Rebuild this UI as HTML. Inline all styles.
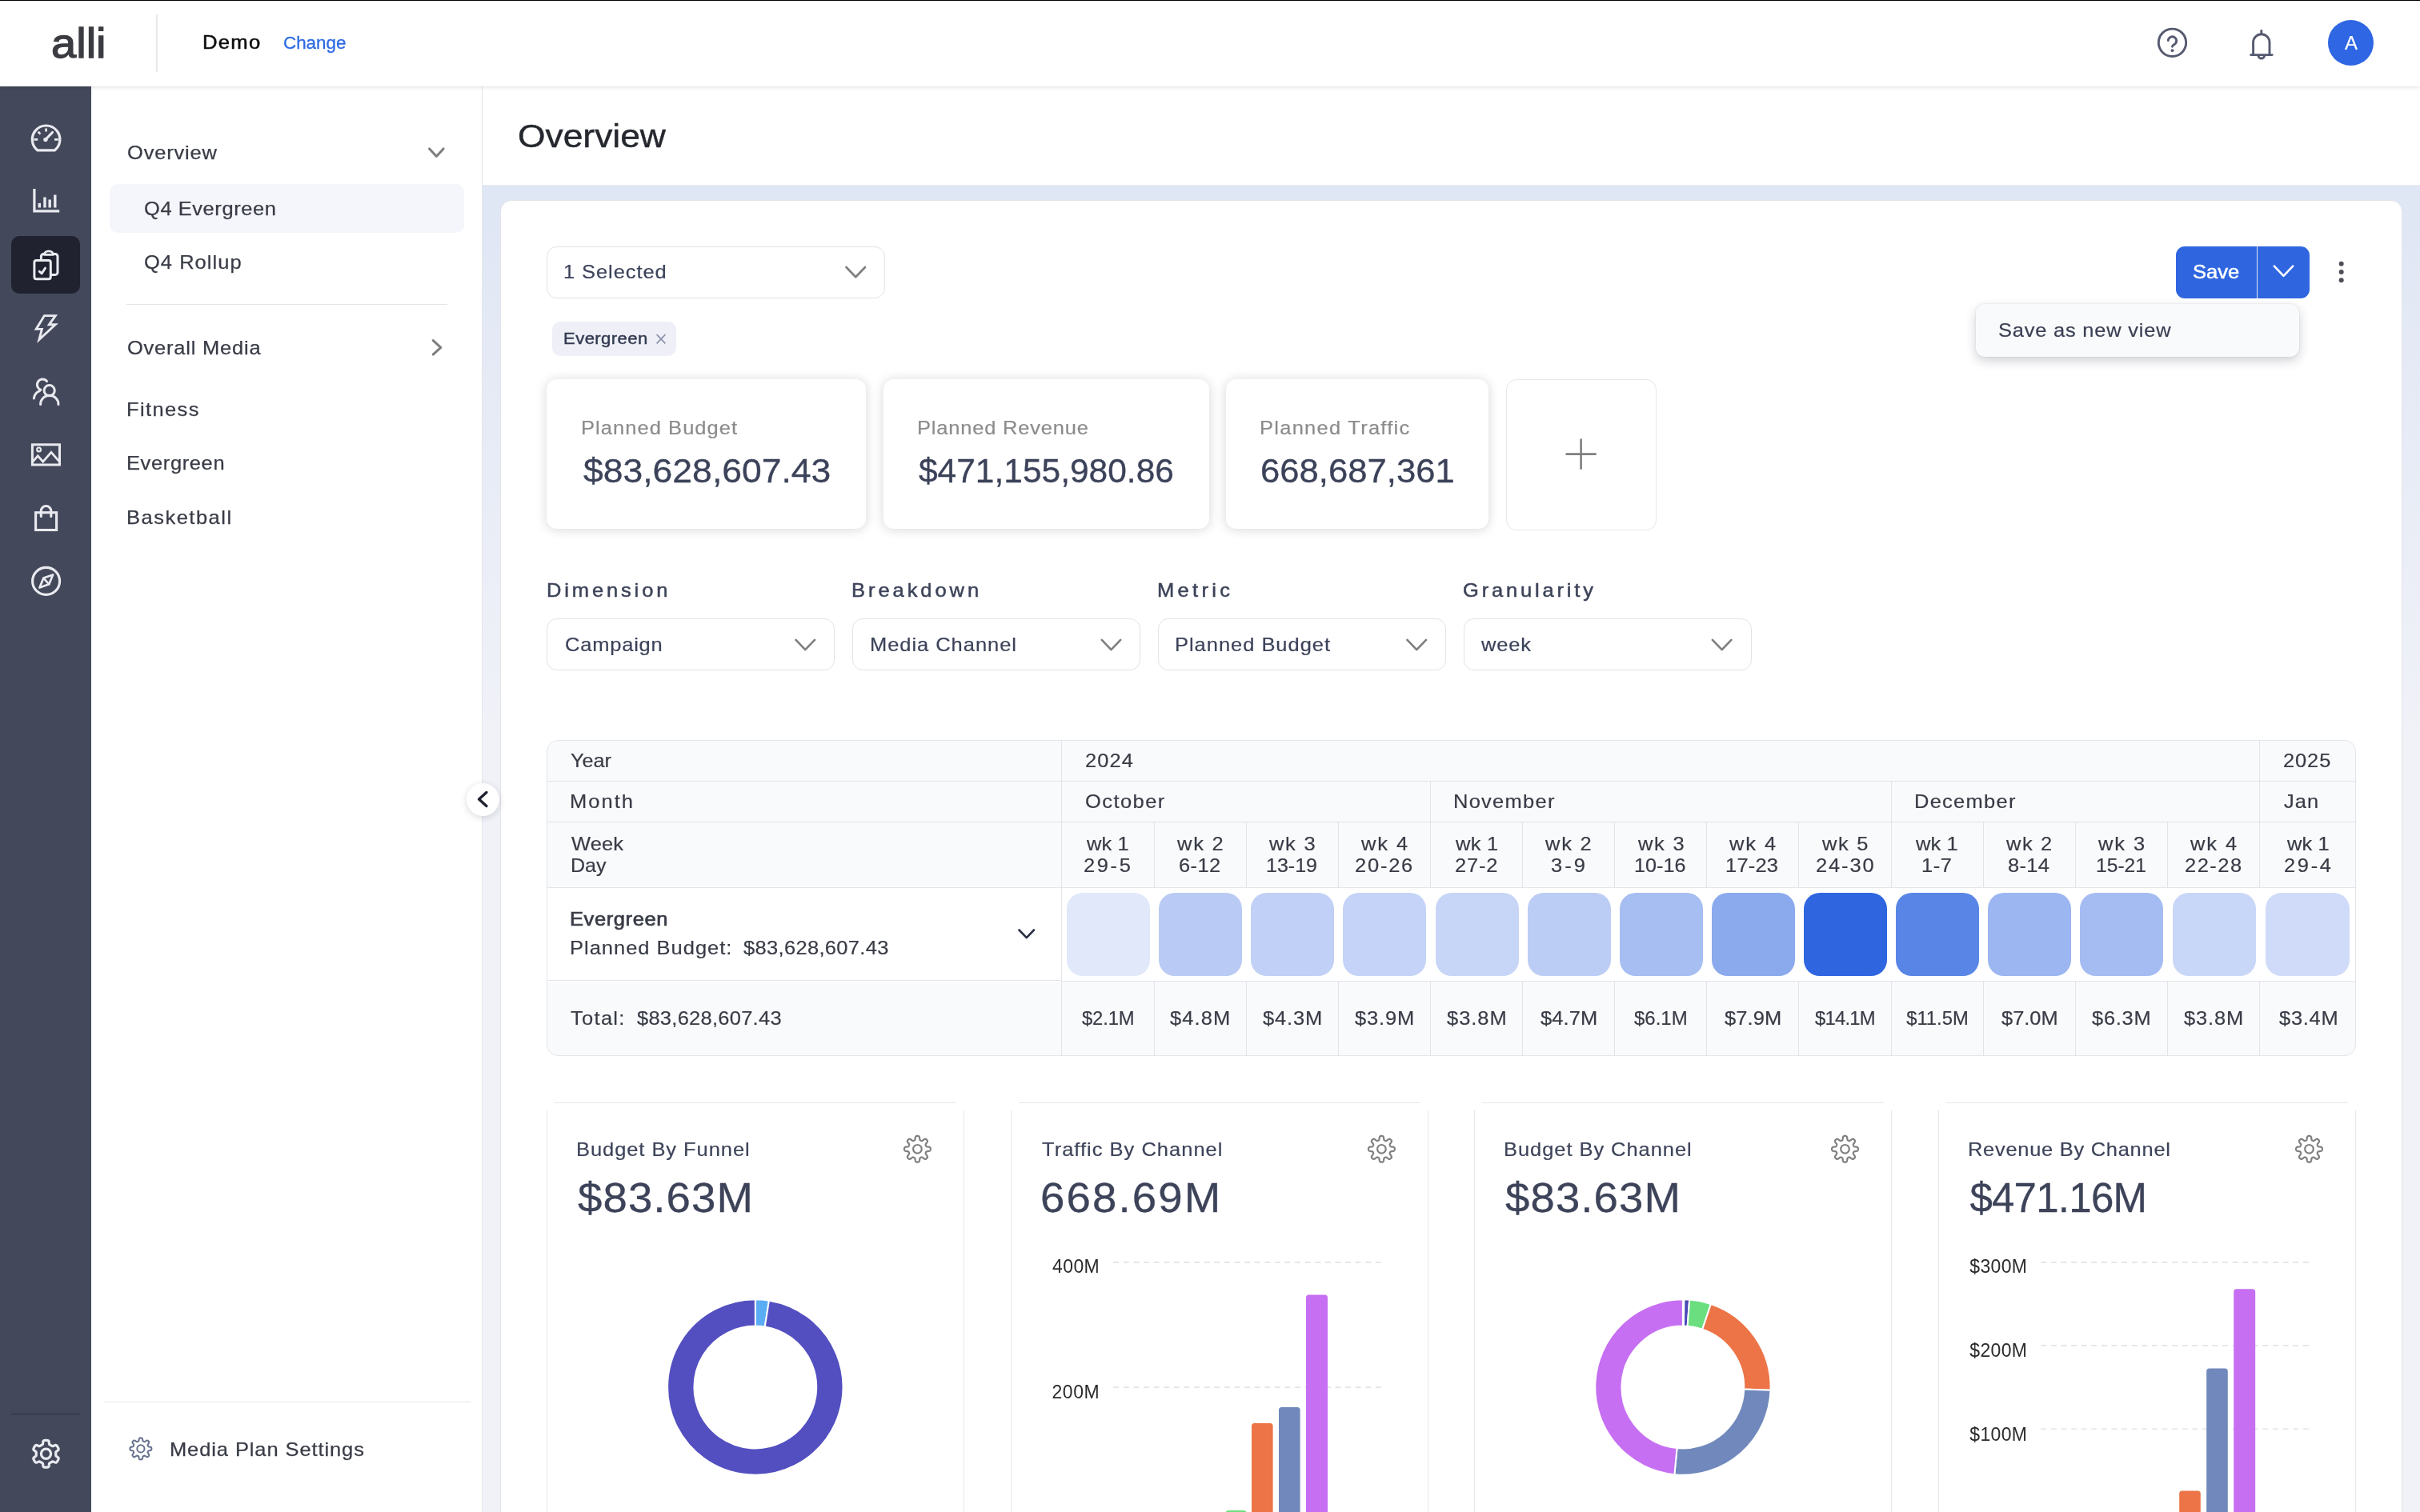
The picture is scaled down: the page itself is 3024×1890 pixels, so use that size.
<!DOCTYPE html>
<html lang="en"><head><meta charset="utf-8"><title>Overview</title><style>
html,body{margin:0;padding:0}
body{width:3024px;height:1890px;overflow:hidden;background:#fff;position:relative;font-family:"Liberation Sans",sans-serif}
span{position:absolute;white-space:pre;display:block}
div,svg{position:absolute;box-sizing:border-box}
svg{overflow:visible}
.sel{border:1.5px solid #e2e3e8;border-radius:13px;background:#fff}
.kpi{background:#fff;border-radius:13px;box-shadow:0 1px 14px rgba(20,20,40,.17)}
.chart{border:2px solid #ededf1;border-radius:12px;background:#fff}
.hl{background:#e3e4e8}
@media (max-width:2000px){html{zoom:.5}}
</style></head><body>
<div id="app" style="left:0;top:0;width:3024px;height:1890px;overflow:hidden;will-change:transform">
<div id="mainbg" style="left:603px;top:231px;width:2421px;height:1659px;background:linear-gradient(#dfe6f4 0px,#f1f2f8 700px,#f1f2f8 100%)"></div>
<div id="card" style="left:625px;top:250px;width:2377px;height:1700px;background:#fff;border-radius:14px;border:1px solid #e3e4ea"></div>
<div id="titlebar" style="left:603px;top:108px;width:2421px;height:124px;background:#fff;border-bottom:1px solid #ebebee"></div>
<div id="navpanel" style="left:114px;top:108px;width:489px;height:1782px;background:#fff;border-right:1px solid #e6e6e9"></div>
<div id="rail" style="left:0;top:108px;width:114px;height:1782px;background:#44485b"></div>
<div id="header" style="left:0;top:0;width:3024px;height:108px;background:#fff;box-shadow:0 1px 5px rgba(0,0,0,.13)"></div>
<div style="left:0;top:0;width:3024px;height:1px;background:#000"></div>
<span style="left:63.62px;top:28.00px;font-size:52.50px;line-height:52.50px;letter-spacing:0.000px;color:#3b3c42;-webkit-text-stroke:1.3px #3b3c42;transform:scaleX(1.0684);transform-origin:0 0;">alli</span>
<div style="left:195px;top:18px;width:2px;height:72px;background:#e9e9ec"></div>
<span style="left:253.35px;top:41.00px;font-size:24.00px;line-height:24.00px;letter-spacing:1.178px;color:#0c0c0c;-webkit-text-stroke:0.5px #0c0c0c;transform:scaleX(1.0700);transform-origin:0 0;">Demo</span>
<span style="left:353.88px;top:43.00px;font-size:22.00px;line-height:22.00px;letter-spacing:0.000px;color:#2d6ae3;-webkit-text-stroke:0.3px #2d6ae3;transform:scaleX(1.0171);transform-origin:0 0;">Change</span>
<svg style="left:0;top:0" width="1" height="1"><g fill="none" stroke="#565a70" stroke-width="2.9" stroke-linecap="round" stroke-linejoin="round"><circle cx="2714.5" cy="53.3" r="17.2"/><path d="M2709.3 50.6A5.2 5.2 0 1 1 2717.6 55.2C2715.6 56.3 2714.5 56.9 2714.5 58.2"/></g><circle cx="2714.5" cy="63.2" r="1.9" fill="#565a70"/></svg>
<svg style="left:0;top:0" width="1" height="1"><g fill="none" stroke="#565a70" stroke-width="2.9" stroke-linecap="round" stroke-linejoin="round"><path d="M2815.6 68.3V53a10.2 10.2 0 0 1 20.4 0V68.3"/><path d="M2812.6 68.6H2839.2"/><path d="M2825.8 38.4V42"/><path d="M2822 70a3.9 3.9 0 0 0 7.6 0"/></g></svg>
<div style="left:2909px;top:25.3px;width:57px;height:57px;border-radius:50%;background:#2f66e3"></div>
<span style="left:2930.00px;top:42.00px;font-size:24.00px;line-height:24.00px;letter-spacing:0.000px;color:#fff;-webkit-text-stroke:0.2px #fff;">A</span>
<div style="left:14px;top:295px;width:86px;height:72px;border-radius:10px;background:#20232f"></div>
<svg style="left:0;top:0" width="1" height="1"><g fill="none" stroke="#e9eaf0" stroke-width="3.2" stroke-linecap="round" stroke-linejoin="round"><path d="M46.9 187.9A17.3 17.3 0 1 1 68.3 187.9Z" stroke-linejoin="round"/><path d="M57 174.4L65.6 165.4" stroke-width="3"/><path d="M57.6 160.4v4.2M47.7 164.7l2.7 2.9M42.4 174.3h4.8M68 174.3h4.8" stroke-width="2.7" stroke-linecap="butt"/></g></svg><svg style="left:0;top:0" width="1" height="1"><circle cx="56.9" cy="174.6" r="2.7" fill="#e9eaf0"/></svg>
<svg style="left:0;top:0" width="1" height="1"><g fill="none" stroke="#e9eaf0" stroke-width="3.2" stroke-linecap="round" stroke-linejoin="round"><path d="M42.9 237.5V263.9H72.6" stroke-linecap="square" stroke-linejoin="miter"/><path d="M49.3 254v5.4M56 246.6v12.8M62.2 249.6v9.8M68.8 243.4v16" stroke-linecap="butt" stroke-width="3.4"/></g></svg>
<svg style="left:0;top:0" width="1" height="1"><g fill="none" stroke="#e9eaf0" stroke-width="3.0" stroke-linecap="round" stroke-linejoin="round"><rect x="42.9" y="325.6" width="20.4" height="23.2" rx="2.6"/><path d="M51.4 325V320.5a3 3 0 0 1 3-3h1.8M66 317.5h3a3 3 0 0 1 3 3V340.4a3 3 0 0 1-3 3H64"/><path d="M55.3 318.4a5.6 4.6 0 0 1 11.2 0Z" stroke-width="2.8"/><path d="M49.3 339.3l2.9 2.5 4.3-6.6" stroke-width="3"/></g></svg>
<svg style="left:0;top:0" width="1" height="1"><g fill="none" stroke="#e9eaf0" stroke-width="2.9" stroke-linecap="round" stroke-linejoin="round"><path d="M55.4 394.6H69.3L61.4 405.7H69.2L48.9 424.6L52.4 411.4H45.2Z" stroke-linejoin="miter"/></g></svg>
<svg style="left:0;top:0" width="1" height="1"><g fill="none" stroke="#e9eaf0" stroke-width="3.0" stroke-linecap="round" stroke-linejoin="round"><circle cx="61.7" cy="488.2" r="6.6"/><path d="M50.6 505.4a11.2 11.2 0 0 1 22.4 0"/><path d="M58.6 476.6a6.8 6.8 0 1 0-7.6 10.6"/><path d="M42.3 498a11.5 11.5 0 0 1 7.3-9.4"/></g></svg>
<svg style="left:0;top:0" width="1" height="1"><g fill="none" stroke="#e9eaf0" stroke-width="3.0" stroke-linecap="round" stroke-linejoin="round"><rect x="40.4" y="555.8" width="34.1" height="25.2" stroke-linejoin="miter"/><circle cx="48.6" cy="561.9" r="2.4" stroke-width="2.2"/><path d="M41.6 576.4L47.3 569.9L53.7 577.2L64 565.4L73.6 576.4" stroke-linejoin="miter" stroke-width="2.8"/></g></svg>
<svg style="left:0;top:0" width="1" height="1"><g fill="none" stroke="#e9eaf0" stroke-width="3.1" stroke-linecap="round" stroke-linejoin="round"><rect x="44.6" y="640.7" width="26" height="21.8" stroke-linejoin="miter"/><path d="M51.3 645.4V638.7a6.25 6.25 0 0 1 12.5 0V645.4"/></g></svg>
<svg style="left:0;top:0" width="1" height="1"><g fill="none" stroke="#e9eaf0" stroke-width="3.1" stroke-linecap="round" stroke-linejoin="round"><circle cx="57.6" cy="726.4" r="17"/><path d="M66.1 718.5L61.3 730.3L49.5 734.6L54.4 722.6Z" stroke-width="2.7" stroke-linejoin="round"/><path d="M54.6 722.8L61.2 730.2" stroke-width="2.5"/></g></svg>
<div style="left:14px;top:1766.5px;width:86px;height:1.3px;background:#2c2f3e"></div>
<svg style="left:0;top:0" width="1" height="1"><g fill="none" stroke="#e9eaf0" stroke-width="3.2" stroke-linecap="round" stroke-linejoin="round"><path d="M57.50 1800.40L57.94 1800.41L58.38 1800.43L58.83 1800.46L59.26 1800.52L59.70 1800.60L60.12 1800.73L60.53 1800.95L60.89 1801.37L61.14 1802.12L61.28 1803.20L61.36 1804.27L61.49 1805.02L61.70 1805.45L61.95 1805.70L62.23 1805.89L62.51 1806.04L62.80 1806.19L63.09 1806.34L63.37 1806.49L63.65 1806.65L63.93 1806.81L64.20 1806.98L64.47 1807.15L64.74 1807.33L65.02 1807.50L65.32 1807.65L65.67 1807.74L66.14 1807.70L66.85 1807.44L67.82 1806.98L68.82 1806.55L69.60 1806.40L70.14 1806.50L70.54 1806.74L70.86 1807.04L71.15 1807.38L71.42 1807.73L71.67 1808.10L71.91 1808.47L72.14 1808.85L72.35 1809.24L72.55 1809.63L72.74 1810.03L72.92 1810.44L73.06 1810.85L73.16 1811.29L73.17 1811.75L72.99 1812.27L72.47 1812.87L71.60 1813.52L70.71 1814.13L70.13 1814.61L69.86 1815.01L69.77 1815.36L69.75 1815.69L69.76 1816.01L69.77 1816.33L69.79 1816.66L69.80 1816.98L69.80 1817.30L69.80 1817.62L69.79 1817.94L69.77 1818.27L69.76 1818.59L69.75 1818.91L69.77 1819.24L69.86 1819.59L70.13 1819.99L70.71 1820.47L71.60 1821.08L72.47 1821.73L72.99 1822.33L73.17 1822.85L73.16 1823.31L73.06 1823.75L72.92 1824.16L72.74 1824.57L72.55 1824.97L72.35 1825.36L72.14 1825.75L71.91 1826.13L71.67 1826.50L71.42 1826.87L71.15 1827.22L70.86 1827.56L70.54 1827.86L70.14 1828.10L69.60 1828.20L68.82 1828.05L67.82 1827.62L66.85 1827.16L66.14 1826.90L65.67 1826.86L65.32 1826.95L65.02 1827.10L64.74 1827.27L64.47 1827.45L64.20 1827.62L63.93 1827.79L63.65 1827.95L63.37 1828.11L63.09 1828.26L62.80 1828.41L62.51 1828.56L62.23 1828.71L61.95 1828.90L61.70 1829.15L61.49 1829.58L61.36 1830.33L61.28 1831.40L61.14 1832.48L60.89 1833.23L60.53 1833.65L60.12 1833.87L59.70 1834.00L59.26 1834.08L58.83 1834.14L58.38 1834.17L57.94 1834.19L57.50 1834.20L57.06 1834.19L56.62 1834.17L56.17 1834.14L55.74 1834.08L55.30 1834.00L54.88 1833.87L54.47 1833.65L54.11 1833.23L53.86 1832.48L53.72 1831.40L53.64 1830.33L53.51 1829.58L53.30 1829.15L53.05 1828.90L52.77 1828.71L52.49 1828.56L52.20 1828.41L51.91 1828.26L51.63 1828.11L51.35 1827.95L51.07 1827.79L50.80 1827.62L50.53 1827.45L50.26 1827.27L49.98 1827.10L49.68 1826.95L49.33 1826.86L48.86 1826.90L48.15 1827.16L47.18 1827.62L46.18 1828.05L45.40 1828.20L44.86 1828.10L44.46 1827.86L44.14 1827.56L43.85 1827.22L43.58 1826.87L43.33 1826.50L43.09 1826.13L42.86 1825.75L42.65 1825.36L42.45 1824.97L42.26 1824.57L42.08 1824.16L41.94 1823.75L41.84 1823.31L41.83 1822.85L42.01 1822.33L42.53 1821.73L43.40 1821.08L44.29 1820.47L44.87 1819.99L45.14 1819.59L45.23 1819.24L45.25 1818.91L45.24 1818.59L45.23 1818.27L45.21 1817.94L45.20 1817.62L45.20 1817.30L45.20 1816.98L45.21 1816.66L45.23 1816.33L45.24 1816.01L45.25 1815.69L45.23 1815.36L45.14 1815.01L44.87 1814.61L44.29 1814.13L43.40 1813.52L42.53 1812.87L42.01 1812.27L41.83 1811.75L41.84 1811.29L41.94 1810.85L42.08 1810.44L42.26 1810.03L42.45 1809.63L42.65 1809.24L42.86 1808.85L43.09 1808.47L43.33 1808.10L43.58 1807.73L43.85 1807.38L44.14 1807.04L44.46 1806.74L44.86 1806.50L45.40 1806.40L46.18 1806.55L47.18 1806.98L48.15 1807.44L48.86 1807.70L49.33 1807.74L49.68 1807.65L49.98 1807.50L50.26 1807.33L50.53 1807.15L50.80 1806.98L51.07 1806.81L51.35 1806.65L51.63 1806.49L51.91 1806.34L52.20 1806.19L52.49 1806.04L52.77 1805.89L53.05 1805.70L53.30 1805.45L53.51 1805.02L53.64 1804.27L53.72 1803.20L53.86 1802.12L54.11 1801.37L54.47 1800.95L54.88 1800.73L55.30 1800.60L55.74 1800.52L56.17 1800.46L56.62 1800.43L57.06 1800.41Z"/><circle cx="57.5" cy="1817.3" r="6.1"/></g></svg>
<span style="left:158.75px;top:179.00px;font-size:23.80px;line-height:23.80px;letter-spacing:0.781px;color:#383b45;-webkit-text-stroke:0.25px #383b45;transform:scaleX(1.0700);transform-origin:0 0;">Overview</span>
<svg style="left:0;top:0" width="1" height="1"><path d="M536.6 185.9L545.4 195.4L554.1 185.9" fill="none" stroke="#7d7d7d" stroke-width="3" stroke-linecap="round" stroke-linejoin="round"/></svg>
<div style="left:137px;top:230px;width:443px;height:61px;border-radius:10px;background:#f5f6fb"></div>
<span style="left:179.75px;top:249.00px;font-size:23.80px;line-height:23.80px;letter-spacing:0.536px;color:#383b45;-webkit-text-stroke:0.25px #383b45;transform:scaleX(1.0700);transform-origin:0 0;">Q4 Evergreen</span>
<span style="left:179.75px;top:316.00px;font-size:23.80px;line-height:23.80px;letter-spacing:0.978px;color:#383b45;-webkit-text-stroke:0.25px #383b45;transform:scaleX(1.0700);transform-origin:0 0;">Q4 Rollup</span>
<div style="left:158px;top:379.5px;width:401px;height:1.5px;background:#e4e5e9"></div>
<span style="left:158.75px;top:423.00px;font-size:23.80px;line-height:23.80px;letter-spacing:0.741px;color:#383b45;-webkit-text-stroke:0.25px #383b45;transform:scaleX(1.0700);transform-origin:0 0;">Overall Media</span>
<svg style="left:0;top:0" width="1" height="1"><path d="M541.2 425.6L550.8 434.4L541.2 443.1" fill="none" stroke="#7d7d7d" stroke-width="3" stroke-linecap="round" stroke-linejoin="round"/></svg>
<span style="left:157.86px;top:500.00px;font-size:23.80px;line-height:23.80px;letter-spacing:1.303px;color:#383b45;-webkit-text-stroke:0.25px #383b45;transform:scaleX(1.0700);transform-origin:0 0;">Fitness</span>
<span style="left:157.86px;top:567.00px;font-size:23.80px;line-height:23.80px;letter-spacing:0.592px;color:#383b45;-webkit-text-stroke:0.25px #383b45;transform:scaleX(1.0700);transform-origin:0 0;">Evergreen</span>
<span style="left:157.86px;top:635.00px;font-size:23.80px;line-height:23.80px;letter-spacing:1.409px;color:#383b45;-webkit-text-stroke:0.25px #383b45;transform:scaleX(1.0700);transform-origin:0 0;">Basketball</span>
<div style="left:130px;top:1751.5px;width:458px;height:1.5px;background:#e4e5e9"></div>
<svg style="left:0;top:0" width="1" height="1"><g fill="none" stroke="#65708d" stroke-width="2.0" stroke-linecap="round" stroke-linejoin="round"><path d="M175.90 1797.40L176.25 1797.41L176.61 1797.45L176.95 1797.52L177.29 1797.66L177.61 1797.91L177.88 1798.37L178.09 1799.09L178.23 1799.95L178.36 1800.67L178.51 1801.15L178.71 1801.42L178.92 1801.60L179.15 1801.73L179.38 1801.84L179.61 1801.94L179.85 1802.03L180.09 1802.12L180.34 1802.19L180.62 1802.21L180.95 1802.15L181.39 1801.93L182.00 1801.51L182.70 1801.01L183.36 1800.64L183.88 1800.51L184.28 1800.55L184.62 1800.69L184.91 1800.89L185.19 1801.11L185.45 1801.35L185.69 1801.61L185.91 1801.89L186.11 1802.18L186.25 1802.52L186.29 1802.92L186.16 1803.44L185.79 1804.10L185.29 1804.80L184.87 1805.41L184.65 1805.85L184.59 1806.18L184.61 1806.46L184.68 1806.71L184.77 1806.95L184.86 1807.19L184.96 1807.42L185.07 1807.65L185.20 1807.88L185.38 1808.09L185.65 1808.29L186.13 1808.44L186.85 1808.57L187.71 1808.71L188.43 1808.92L188.89 1809.19L189.14 1809.51L189.28 1809.85L189.35 1810.19L189.39 1810.55L189.40 1810.90L189.39 1811.25L189.35 1811.61L189.28 1811.95L189.14 1812.29L188.89 1812.61L188.43 1812.88L187.71 1813.09L186.85 1813.23L186.13 1813.36L185.65 1813.51L185.38 1813.71L185.20 1813.92L185.07 1814.15L184.96 1814.38L184.86 1814.61L184.77 1814.85L184.68 1815.09L184.61 1815.34L184.59 1815.62L184.65 1815.95L184.87 1816.39L185.29 1817.00L185.79 1817.70L186.16 1818.36L186.29 1818.88L186.25 1819.28L186.11 1819.62L185.91 1819.91L185.69 1820.19L185.45 1820.45L185.19 1820.69L184.91 1820.91L184.62 1821.11L184.28 1821.25L183.88 1821.29L183.36 1821.16L182.70 1820.79L182.00 1820.29L181.39 1819.87L180.95 1819.65L180.62 1819.59L180.34 1819.61L180.09 1819.68L179.85 1819.77L179.61 1819.86L179.38 1819.96L179.15 1820.07L178.92 1820.20L178.71 1820.38L178.51 1820.65L178.36 1821.13L178.23 1821.85L178.09 1822.71L177.88 1823.43L177.61 1823.89L177.29 1824.14L176.95 1824.28L176.61 1824.35L176.25 1824.39L175.90 1824.40L175.55 1824.39L175.19 1824.35L174.85 1824.28L174.51 1824.14L174.19 1823.89L173.92 1823.43L173.71 1822.71L173.57 1821.85L173.44 1821.13L173.29 1820.65L173.09 1820.38L172.88 1820.20L172.65 1820.07L172.42 1819.96L172.19 1819.86L171.95 1819.77L171.71 1819.68L171.46 1819.61L171.18 1819.59L170.85 1819.65L170.41 1819.87L169.80 1820.29L169.10 1820.79L168.44 1821.16L167.92 1821.29L167.52 1821.25L167.18 1821.11L166.89 1820.91L166.61 1820.69L166.35 1820.45L166.11 1820.19L165.89 1819.91L165.69 1819.62L165.55 1819.28L165.51 1818.88L165.64 1818.36L166.01 1817.70L166.51 1817.00L166.93 1816.39L167.15 1815.95L167.21 1815.62L167.19 1815.34L167.12 1815.09L167.03 1814.85L166.94 1814.61L166.84 1814.38L166.73 1814.15L166.60 1813.92L166.42 1813.71L166.15 1813.51L165.67 1813.36L164.95 1813.23L164.09 1813.09L163.37 1812.88L162.91 1812.61L162.66 1812.29L162.52 1811.95L162.45 1811.61L162.41 1811.25L162.40 1810.90L162.41 1810.55L162.45 1810.19L162.52 1809.85L162.66 1809.51L162.91 1809.19L163.37 1808.92L164.09 1808.71L164.95 1808.57L165.67 1808.44L166.15 1808.29L166.42 1808.09L166.60 1807.88L166.73 1807.65L166.84 1807.42L166.94 1807.19L167.03 1806.95L167.12 1806.71L167.19 1806.46L167.21 1806.18L167.15 1805.85L166.93 1805.41L166.51 1804.80L166.01 1804.10L165.64 1803.44L165.51 1802.92L165.55 1802.52L165.69 1802.18L165.89 1801.89L166.11 1801.61L166.35 1801.35L166.61 1801.11L166.89 1800.89L167.18 1800.69L167.52 1800.55L167.92 1800.51L168.44 1800.64L169.10 1801.01L169.80 1801.51L170.41 1801.93L170.85 1802.15L171.18 1802.21L171.46 1802.19L171.71 1802.12L171.95 1802.03L172.19 1801.94L172.42 1801.84L172.65 1801.73L172.88 1801.60L173.09 1801.42L173.29 1801.15L173.44 1800.67L173.57 1799.95L173.71 1799.09L173.92 1798.37L174.19 1797.91L174.51 1797.66L174.85 1797.52L175.19 1797.45L175.55 1797.41Z"/><circle cx="175.9" cy="1810.9" r="4.6"/></g></svg>
<span style="left:212.46px;top:1800.00px;font-size:23.80px;line-height:23.80px;letter-spacing:0.852px;color:#383b45;-webkit-text-stroke:0.25px #383b45;transform:scaleX(1.0700);transform-origin:0 0;">Media Plan Settings</span>
<div style="left:583px;top:978.6px;width:41px;height:41px;border-radius:50%;background:#fff;box-shadow:0 2px 8px rgba(20,25,50,.16)"></div>
<svg style="left:0;top:0" width="1" height="1"><path d="M607.9 990.5L598.5 999.0L607.9 1007.5" fill="none" stroke="#1f2230" stroke-width="3.4" stroke-linecap="round" stroke-linejoin="round"/></svg>
<span style="left:646.80px;top:149.00px;font-size:41.50px;line-height:41.50px;letter-spacing:0.000px;color:#26282f;-webkit-text-stroke:0.45px #26282f;transform:scaleX(1.0690);transform-origin:0 0;">Overview</span>
<div class="sel" style="left:683px;top:308px;width:423px;height:65px"></div>
<span style="left:704.09px;top:328.00px;font-size:23.80px;line-height:23.80px;letter-spacing:0.870px;color:#3b4259;-webkit-text-stroke:0.2px #3b4259;transform:scaleX(1.0700);transform-origin:0 0;">1 Selected</span>
<svg style="left:0;top:0" width="1" height="1"><path d="M1057.5 334.0L1069.2 346.2L1081.0 334.0" fill="none" stroke="#808080" stroke-width="2.7" stroke-linecap="round" stroke-linejoin="round"/></svg>
<div style="left:2719px;top:308px;width:167px;height:65px;border-radius:11px;background:#2f66e0"></div>
<div style="left:2819.5px;top:308px;width:1.5px;height:65px;background:#dfe8fb"></div>
<span style="left:2739.85px;top:328.00px;font-size:24.20px;line-height:24.20px;letter-spacing:0.000px;color:#fff;-webkit-text-stroke:0.5px #fff;transform:scaleX(1.0566);transform-origin:0 0;">Save</span>
<svg style="left:0;top:0" width="1" height="1"><path d="M2841.8 332.7L2853.5 344.9L2865.2 332.7" fill="none" stroke="#fff" stroke-width="2.6" stroke-linecap="round" stroke-linejoin="round"/></svg>
<svg style="left:0;top:0" width="1" height="1"><g fill="#4d4f57"><circle cx="2925.7" cy="329.7" r="3"/><circle cx="2925.7" cy="340" r="3"/><circle cx="2925.7" cy="350.3" r="3"/></g></svg>
<div style="left:2468.5px;top:380px;width:404.5px;height:66px;border-radius:11px;background:#f9fafc;box-shadow:0 5px 14px rgba(20,25,50,.20),0 0 2px rgba(20,25,50,.12)"></div>
<span style="left:2497.35px;top:401.00px;font-size:23.80px;line-height:23.80px;letter-spacing:0.731px;color:#3a3f52;-webkit-text-stroke:0.2px #3a3f52;transform:scaleX(1.0700);transform-origin:0 0;">Save as new view</span>
<div style="left:690px;top:402px;width:155px;height:43px;border-radius:10px;background:#eff0f7"></div>
<span style="left:704.23px;top:413.00px;font-size:20.70px;line-height:20.70px;letter-spacing:0.373px;color:#333b52;-webkit-text-stroke:0.45px #333b52;transform:scaleX(1.0700);transform-origin:0 0;">Evergreen</span>
<svg style="left:0;top:0" width="1" height="1"><path d="M820.6 418.2L831.4 429.4M831.4 418.2L820.6 429.4" stroke="#8a93ab" stroke-width="1.7" fill="none"/></svg>
<div class="kpi" style="left:683px;top:474px;width:399px;height:187px"></div>
<div class="kpi" style="left:1104px;top:474px;width:407px;height:187px"></div>
<div class="kpi" style="left:1532px;top:474px;width:328px;height:187px"></div>
<div style="left:1881.5px;top:474px;width:188.5px;height:189px;border-radius:13px;border:1.5px solid #e6e7eb;background:#fff"></div>
<svg style="left:0;top:0" width="1" height="1"><path d="M1956.5 567.6H1994.7M1975.6 548.5V586.7" stroke="#7f7f7f" stroke-width="2.6" fill="none"/></svg>
<span style="left:725.96px;top:523.00px;font-size:23.80px;line-height:23.80px;letter-spacing:1.000px;color:#8b8b8b;-webkit-text-stroke:0.2px #8b8b8b;transform:scaleX(1.0700);transform-origin:0 0;">Planned Budget</span>
<span style="left:1145.76px;top:523.00px;font-size:23.80px;line-height:23.80px;letter-spacing:0.759px;color:#8b8b8b;-webkit-text-stroke:0.2px #8b8b8b;transform:scaleX(1.0700);transform-origin:0 0;">Planned Revenue</span>
<span style="left:1574.46px;top:523.00px;font-size:23.80px;line-height:23.80px;letter-spacing:1.192px;color:#8b8b8b;-webkit-text-stroke:0.2px #8b8b8b;transform:scaleX(1.0700);transform-origin:0 0;">Planned Traffic</span>
<span style="left:728.55px;top:568.00px;font-size:41.80px;line-height:41.80px;letter-spacing:0.000px;color:#3b4259;-webkit-text-stroke:0.3px #3b4259;transform:scaleX(1.0648);transform-origin:0 0;">$83,628,607.43</span>
<span style="left:1148.38px;top:568.00px;font-size:41.80px;line-height:41.80px;letter-spacing:0.000px;color:#3b4259;-webkit-text-stroke:0.3px #3b4259;transform:scaleX(1.0163);transform-origin:0 0;">$471,155,980.86</span>
<span style="left:1575.02px;top:568.00px;font-size:41.80px;line-height:41.80px;letter-spacing:-0.000px;color:#3b4259;-webkit-text-stroke:0.3px #3b4259;transform:scaleX(1.0445);transform-origin:0 0;">668,687,361</span>
<div class="sel" style="left:683px;top:773px;width:360px;height:65px"></div>
<span style="left:682.76px;top:726.00px;font-size:23.80px;line-height:23.80px;letter-spacing:3.629px;color:#3d4359;-webkit-text-stroke:0.5px #3d4359;transform:scaleX(1.0700);transform-origin:0 0;">Dimension</span>
<span style="left:705.73px;top:794.00px;font-size:23.80px;line-height:23.80px;letter-spacing:0.761px;color:#3b4259;-webkit-text-stroke:0.2px #3b4259;transform:scaleX(1.0700);transform-origin:0 0;">Campaign</span>
<svg style="left:0;top:0" width="1" height="1"><path d="M994.5 799.9L1006.2 812.1L1018.0 799.9" fill="none" stroke="#808080" stroke-width="2.7" stroke-linecap="round" stroke-linejoin="round"/></svg>
<div class="sel" style="left:1065.3px;top:773px;width:360px;height:65px"></div>
<span style="left:1064.46px;top:726.00px;font-size:23.80px;line-height:23.80px;letter-spacing:3.707px;color:#3d4359;-webkit-text-stroke:0.5px #3d4359;transform:scaleX(1.0700);transform-origin:0 0;">Breakdown</span>
<span style="left:1086.96px;top:794.00px;font-size:23.80px;line-height:23.80px;letter-spacing:0.909px;color:#3b4259;-webkit-text-stroke:0.2px #3b4259;transform:scaleX(1.0700);transform-origin:0 0;">Media Channel</span>
<svg style="left:0;top:0" width="1" height="1"><path d="M1376.8 799.9L1388.5 812.1L1400.2 799.9" fill="none" stroke="#808080" stroke-width="2.7" stroke-linecap="round" stroke-linejoin="round"/></svg>
<div class="sel" style="left:1447px;top:773px;width:360px;height:65px"></div>
<span style="left:1446.26px;top:726.00px;font-size:23.80px;line-height:23.80px;letter-spacing:4.064px;color:#3d4359;-webkit-text-stroke:0.5px #3d4359;transform:scaleX(1.0700);transform-origin:0 0;">Metric</span>
<span style="left:1468.36px;top:794.00px;font-size:23.80px;line-height:23.80px;letter-spacing:0.921px;color:#3b4259;-webkit-text-stroke:0.2px #3b4259;transform:scaleX(1.0700);transform-origin:0 0;">Planned Budget</span>
<svg style="left:0;top:0" width="1" height="1"><path d="M1758.5 799.9L1770.2 812.1L1782.0 799.9" fill="none" stroke="#808080" stroke-width="2.7" stroke-linecap="round" stroke-linejoin="round"/></svg>
<div class="sel" style="left:1828.5px;top:773px;width:360px;height:65px"></div>
<span style="left:1828.23px;top:726.00px;font-size:23.80px;line-height:23.80px;letter-spacing:3.593px;color:#3d4359;-webkit-text-stroke:0.5px #3d4359;transform:scaleX(1.0700);transform-origin:0 0;">Granularity</span>
<span style="left:1851.46px;top:794.00px;font-size:23.80px;line-height:23.80px;letter-spacing:0.813px;color:#3b4259;-webkit-text-stroke:0.2px #3b4259;transform:scaleX(1.0700);transform-origin:0 0;">week</span>
<svg style="left:0;top:0" width="1" height="1"><path d="M2139.9 799.9L2151.7 812.1L2163.4 799.9" fill="none" stroke="#808080" stroke-width="2.7" stroke-linecap="round" stroke-linejoin="round"/></svg>
<div id="tbl" style="left:683px;top:925px;width:2261px;height:395px;border:1px solid #e3e5ea;border-radius:14px;background:#f9fafc;overflow:hidden"><div style="left:0;top:184px;width:2261px;height:117px;background:#fff"></div></div>
<div class="hl" style="left:683px;top:976px;width:2261px;height:1px"></div>
<div class="hl" style="left:683px;top:1027px;width:2261px;height:1px"></div>
<div class="hl" style="left:683px;top:1109px;width:2261px;height:1px"></div>
<div class="hl" style="left:683px;top:1225px;width:643px;height:1px"></div>
<div class="hl" style="left:1326px;top:1226px;width:1618px;height:1px"></div>
<div class="hl" style="left:1326px;top:925px;width:1px;height:395px"></div>
<div class="hl" style="left:2823px;top:925px;width:1px;height:184px"></div>
<div class="hl" style="left:2823px;top:1227px;width:1px;height:93px"></div>
<div class="hl" style="left:1787px;top:977px;width:1px;height:132px"></div>
<div class="hl" style="left:1787px;top:1227px;width:1px;height:93px"></div>
<div class="hl" style="left:2363px;top:977px;width:1px;height:132px"></div>
<div class="hl" style="left:2363px;top:1227px;width:1px;height:93px"></div>
<div class="hl" style="left:1442px;top:1028px;width:1px;height:81px"></div>
<div class="hl" style="left:1442px;top:1227px;width:1px;height:93px"></div>
<div class="hl" style="left:1557px;top:1028px;width:1px;height:81px"></div>
<div class="hl" style="left:1557px;top:1227px;width:1px;height:93px"></div>
<div class="hl" style="left:1672px;top:1028px;width:1px;height:81px"></div>
<div class="hl" style="left:1672px;top:1227px;width:1px;height:93px"></div>
<div class="hl" style="left:1902px;top:1028px;width:1px;height:81px"></div>
<div class="hl" style="left:1902px;top:1227px;width:1px;height:93px"></div>
<div class="hl" style="left:2017px;top:1028px;width:1px;height:81px"></div>
<div class="hl" style="left:2017px;top:1227px;width:1px;height:93px"></div>
<div class="hl" style="left:2132px;top:1028px;width:1px;height:81px"></div>
<div class="hl" style="left:2132px;top:1227px;width:1px;height:93px"></div>
<div class="hl" style="left:2247px;top:1028px;width:1px;height:81px"></div>
<div class="hl" style="left:2247px;top:1227px;width:1px;height:93px"></div>
<div class="hl" style="left:2478px;top:1028px;width:1px;height:81px"></div>
<div class="hl" style="left:2478px;top:1227px;width:1px;height:93px"></div>
<div class="hl" style="left:2593px;top:1028px;width:1px;height:81px"></div>
<div class="hl" style="left:2593px;top:1227px;width:1px;height:93px"></div>
<div class="hl" style="left:2708px;top:1028px;width:1px;height:81px"></div>
<div class="hl" style="left:2708px;top:1227px;width:1px;height:93px"></div>
<span style="left:713.30px;top:939.00px;font-size:23.80px;line-height:23.80px;letter-spacing:0.000px;color:#383b45;-webkit-text-stroke:0.2px #383b45;transform:scaleX(1.0584);transform-origin:0 0;">Year</span>
<span style="left:712.46px;top:990.00px;font-size:23.80px;line-height:23.80px;letter-spacing:1.915px;color:#383b45;-webkit-text-stroke:0.2px #383b45;transform:scaleX(1.0700);transform-origin:0 0;">Month</span>
<span style="left:713.74px;top:1043.00px;font-size:23.80px;line-height:23.80px;letter-spacing:0.118px;color:#383b45;-webkit-text-stroke:0.2px #383b45;transform:scaleX(1.0700);transform-origin:0 0;">Week</span>
<span style="left:712.50px;top:1070.00px;font-size:23.80px;line-height:23.80px;letter-spacing:-0.000px;color:#383b45;-webkit-text-stroke:0.2px #383b45;transform:scaleX(1.0520);transform-origin:0 0;">Day</span>
<span style="left:1355.53px;top:939.00px;font-size:23.80px;line-height:23.80px;letter-spacing:1.020px;color:#383b45;-webkit-text-stroke:0.2px #383b45;transform:scaleX(1.0700);transform-origin:0 0;">2024</span>
<span style="left:2853.13px;top:939.00px;font-size:23.80px;line-height:23.80px;letter-spacing:0.839px;color:#383b45;-webkit-text-stroke:0.2px #383b45;transform:scaleX(1.0700);transform-origin:0 0;">2025</span>
<span style="left:1355.55px;top:990.00px;font-size:23.80px;line-height:23.80px;letter-spacing:1.345px;color:#383b45;-webkit-text-stroke:0.2px #383b45;transform:scaleX(1.0700);transform-origin:0 0;">October</span>
<span style="left:1815.96px;top:990.00px;font-size:23.80px;line-height:23.80px;letter-spacing:1.196px;color:#383b45;-webkit-text-stroke:0.2px #383b45;transform:scaleX(1.0700);transform-origin:0 0;">November</span>
<span style="left:2391.66px;top:990.00px;font-size:23.80px;line-height:23.80px;letter-spacing:1.196px;color:#383b45;-webkit-text-stroke:0.2px #383b45;transform:scaleX(1.0700);transform-origin:0 0;">December</span>
<span style="left:2854.02px;top:990.00px;font-size:23.80px;line-height:23.80px;letter-spacing:0.969px;color:#383b45;-webkit-text-stroke:0.2px #383b45;transform:scaleX(1.0700);transform-origin:0 0;">Jan</span>
<span style="left:1358.23px;top:1043.00px;font-size:23.80px;line-height:23.80px;letter-spacing:0.129px;color:#383b45;-webkit-text-stroke:0.2px #383b45;transform:scaleX(1.0700);transform-origin:0 0;">wk 1</span>
<span style="left:1354.44px;top:1070.00px;font-size:23.80px;line-height:23.80px;letter-spacing:2.449px;color:#383b45;-webkit-text-stroke:0.2px #383b45;transform:scaleX(1.0700);transform-origin:0 0;">29-5</span>
<span style="left:1351.98px;top:1261.00px;font-size:23.80px;line-height:23.80px;letter-spacing:-0.131px;color:#383b45;-webkit-text-stroke:0.2px #383b45;">$2.1M</span>
<div style="left:1333.0px;top:1116px;width:104.0px;height:104px;border-radius:20px;background:#e0e8fa"></div>
<span style="left:1470.91px;top:1043.00px;font-size:23.80px;line-height:23.80px;letter-spacing:1.655px;color:#383b45;-webkit-text-stroke:0.2px #383b45;transform:scaleX(1.0700);transform-origin:0 0;">wk 2</span>
<span style="left:1473.02px;top:1070.00px;font-size:23.80px;line-height:23.80px;letter-spacing:0.359px;color:#383b45;-webkit-text-stroke:0.2px #383b45;transform:scaleX(1.0700);transform-origin:0 0;">6-12</span>
<span style="left:1462.39px;top:1261.00px;font-size:23.80px;line-height:23.80px;letter-spacing:1.027px;color:#383b45;-webkit-text-stroke:0.2px #383b45;transform:scaleX(1.0700);transform-origin:0 0;">$4.8M</span>
<div style="left:1448.1px;top:1116px;width:104.0px;height:104px;border-radius:20px;background:#b9cbf4"></div>
<span style="left:1586.04px;top:1043.00px;font-size:23.80px;line-height:23.80px;letter-spacing:1.616px;color:#383b45;-webkit-text-stroke:0.2px #383b45;transform:scaleX(1.0700);transform-origin:0 0;">wk 3</span>
<span style="left:1581.85px;top:1070.00px;font-size:23.80px;line-height:23.80px;letter-spacing:0.000px;color:#383b45;-webkit-text-stroke:0.2px #383b45;transform:scaleX(1.0515);transform-origin:0 0;">13-19</span>
<span style="left:1578.02px;top:1261.00px;font-size:23.80px;line-height:23.80px;letter-spacing:0.794px;color:#383b45;-webkit-text-stroke:0.2px #383b45;transform:scaleX(1.0700);transform-origin:0 0;">$4.3M</span>
<div style="left:1563.3px;top:1116px;width:104.0px;height:104px;border-radius:20px;background:#c0d0f6"></div>
<span style="left:1700.67px;top:1043.00px;font-size:23.80px;line-height:23.80px;letter-spacing:1.808px;color:#383b45;-webkit-text-stroke:0.2px #383b45;transform:scaleX(1.0700);transform-origin:0 0;">wk 4</span>
<span style="left:1693.13px;top:1070.00px;font-size:23.80px;line-height:23.80px;letter-spacing:1.665px;color:#383b45;-webkit-text-stroke:0.2px #383b45;transform:scaleX(1.0700);transform-origin:0 0;">20-26</span>
<span style="left:1693.15px;top:1261.00px;font-size:23.80px;line-height:23.80px;letter-spacing:0.794px;color:#383b45;-webkit-text-stroke:0.2px #383b45;transform:scaleX(1.0700);transform-origin:0 0;">$3.9M</span>
<div style="left:1678.4px;top:1116px;width:104.0px;height:104px;border-radius:20px;background:#c4d3f7"></div>
<span style="left:1818.55px;top:1043.00px;font-size:23.80px;line-height:23.80px;letter-spacing:0.253px;color:#383b45;-webkit-text-stroke:0.2px #383b45;transform:scaleX(1.0700);transform-origin:0 0;">wk 1</span>
<span style="left:1817.71px;top:1070.00px;font-size:23.80px;line-height:23.80px;letter-spacing:0.795px;color:#383b45;-webkit-text-stroke:0.2px #383b45;transform:scaleX(1.0700);transform-origin:0 0;">27-2</span>
<span style="left:1808.03px;top:1261.00px;font-size:23.80px;line-height:23.80px;letter-spacing:0.910px;color:#383b45;-webkit-text-stroke:0.2px #383b45;transform:scaleX(1.0700);transform-origin:0 0;">$3.8M</span>
<div style="left:1793.5px;top:1116px;width:104.0px;height:104px;border-radius:20px;background:#c7d5f7"></div>
<span style="left:1931.43px;top:1043.00px;font-size:23.80px;line-height:23.80px;letter-spacing:1.655px;color:#383b45;-webkit-text-stroke:0.2px #383b45;transform:scaleX(1.0700);transform-origin:0 0;">wk 2</span>
<span style="left:1938.31px;top:1070.00px;font-size:23.80px;line-height:23.80px;letter-spacing:2.805px;color:#383b45;-webkit-text-stroke:0.2px #383b45;transform:scaleX(1.0700);transform-origin:0 0;">3-9</span>
<span style="left:1924.91px;top:1261.00px;font-size:23.80px;line-height:23.80px;letter-spacing:0.093px;color:#383b45;-webkit-text-stroke:0.2px #383b45;transform:scaleX(1.0700);transform-origin:0 0;">$4.7M</span>
<div style="left:1908.7px;top:1116px;width:104.0px;height:104px;border-radius:20px;background:#bbcdf5"></div>
<span style="left:2046.56px;top:1043.00px;font-size:23.80px;line-height:23.80px;letter-spacing:1.616px;color:#383b45;-webkit-text-stroke:0.2px #383b45;transform:scaleX(1.0700);transform-origin:0 0;">wk 3</span>
<span style="left:2042.10px;top:1070.00px;font-size:23.80px;line-height:23.80px;letter-spacing:0.000px;color:#383b45;-webkit-text-stroke:0.2px #383b45;transform:scaleX(1.0590);transform-origin:0 0;">10-16</span>
<span style="left:2042.26px;top:1261.00px;font-size:23.80px;line-height:23.80px;letter-spacing:0.000px;color:#383b45;-webkit-text-stroke:0.2px #383b45;transform:scaleX(1.0075);transform-origin:0 0;">$6.1M</span>
<div style="left:2023.8px;top:1116px;width:104.0px;height:104px;border-radius:20px;background:#a6bef1"></div>
<span style="left:2161.19px;top:1043.00px;font-size:23.80px;line-height:23.80px;letter-spacing:1.808px;color:#383b45;-webkit-text-stroke:0.2px #383b45;transform:scaleX(1.0700);transform-origin:0 0;">wk 4</span>
<span style="left:2156.47px;top:1070.00px;font-size:23.80px;line-height:23.80px;letter-spacing:0.202px;color:#383b45;-webkit-text-stroke:0.2px #383b45;transform:scaleX(1.0700);transform-origin:0 0;">17-23</span>
<span style="left:2155.17px;top:1261.00px;font-size:23.80px;line-height:23.80px;letter-spacing:0.093px;color:#383b45;-webkit-text-stroke:0.2px #383b45;transform:scaleX(1.0700);transform-origin:0 0;">$7.9M</span>
<div style="left:2138.9px;top:1116px;width:104.0px;height:104px;border-radius:20px;background:#8baaee"></div>
<span style="left:2276.82px;top:1043.00px;font-size:23.80px;line-height:23.80px;letter-spacing:1.596px;color:#383b45;-webkit-text-stroke:0.2px #383b45;transform:scaleX(1.0700);transform-origin:0 0;">wk 5</span>
<span style="left:2268.53px;top:1070.00px;font-size:23.80px;line-height:23.80px;letter-spacing:1.752px;color:#383b45;-webkit-text-stroke:0.2px #383b45;transform:scaleX(1.0700);transform-origin:0 0;">24-30</span>
<span style="left:2268.07px;top:1261.00px;font-size:23.80px;line-height:23.80px;letter-spacing:-0.766px;color:#383b45;-webkit-text-stroke:0.2px #383b45;">$14.1M</span>
<div style="left:2254.0px;top:1116px;width:104.0px;height:104px;border-radius:20px;background:#2f66e0"></div>
<span style="left:2394.40px;top:1043.00px;font-size:23.80px;line-height:23.80px;letter-spacing:0.129px;color:#383b45;-webkit-text-stroke:0.2px #383b45;transform:scaleX(1.0700);transform-origin:0 0;">wk 1</span>
<span style="left:2400.88px;top:1070.00px;font-size:23.80px;line-height:23.80px;letter-spacing:0.477px;color:#383b45;-webkit-text-stroke:0.2px #383b45;transform:scaleX(1.0700);transform-origin:0 0;">1-7</span>
<span style="left:2382.20px;top:1261.00px;font-size:23.80px;line-height:23.80px;letter-spacing:-0.009px;color:#383b45;-webkit-text-stroke:0.2px #383b45;">$11.5M</span>
<div style="left:2369.2px;top:1116px;width:104.0px;height:104px;border-radius:20px;background:#5986e6"></div>
<span style="left:2507.33px;top:1043.00px;font-size:23.80px;line-height:23.80px;letter-spacing:1.499px;color:#383b45;-webkit-text-stroke:0.2px #383b45;transform:scaleX(1.0700);transform-origin:0 0;">wk 2</span>
<span style="left:2509.18px;top:1070.00px;font-size:23.80px;line-height:23.80px;letter-spacing:0.265px;color:#383b45;-webkit-text-stroke:0.2px #383b45;transform:scaleX(1.0700);transform-origin:0 0;">8-14</span>
<span style="left:2500.81px;top:1261.00px;font-size:23.80px;line-height:23.80px;letter-spacing:0.000px;color:#383b45;-webkit-text-stroke:0.2px #383b45;transform:scaleX(1.0684);transform-origin:0 0;">$7.0M</span>
<div style="left:2484.3px;top:1116px;width:104.0px;height:104px;border-radius:20px;background:#9bb6f0"></div>
<span style="left:2621.96px;top:1043.00px;font-size:23.80px;line-height:23.80px;letter-spacing:1.771px;color:#383b45;-webkit-text-stroke:0.2px #383b45;transform:scaleX(1.0700);transform-origin:0 0;">wk 3</span>
<span style="left:2618.55px;top:1070.00px;font-size:23.80px;line-height:23.80px;letter-spacing:0.000px;color:#383b45;-webkit-text-stroke:0.2px #383b45;transform:scaleX(1.0353);transform-origin:0 0;">15-21</span>
<span style="left:2614.44px;top:1261.00px;font-size:23.80px;line-height:23.80px;letter-spacing:0.677px;color:#383b45;-webkit-text-stroke:0.2px #383b45;transform:scaleX(1.0700);transform-origin:0 0;">$6.3M</span>
<div style="left:2599.4px;top:1116px;width:104.0px;height:104px;border-radius:20px;background:#a5bcf2"></div>
<span style="left:2736.84px;top:1043.00px;font-size:23.80px;line-height:23.80px;letter-spacing:1.808px;color:#383b45;-webkit-text-stroke:0.2px #383b45;transform:scaleX(1.0700);transform-origin:0 0;">wk 4</span>
<span style="left:2729.80px;top:1070.00px;font-size:23.80px;line-height:23.80px;letter-spacing:1.417px;color:#383b45;-webkit-text-stroke:0.2px #383b45;transform:scaleX(1.0700);transform-origin:0 0;">22-28</span>
<span style="left:2729.32px;top:1261.00px;font-size:23.80px;line-height:23.80px;letter-spacing:0.794px;color:#383b45;-webkit-text-stroke:0.2px #383b45;transform:scaleX(1.0700);transform-origin:0 0;">$3.8M</span>
<div style="left:2714.6px;top:1116px;width:104.0px;height:104px;border-radius:20px;background:#c8d6f8"></div>
<span style="left:2857.81px;top:1043.00px;font-size:23.80px;line-height:23.80px;letter-spacing:0.129px;color:#383b45;-webkit-text-stroke:0.2px #383b45;transform:scaleX(1.0700);transform-origin:0 0;">wk 1</span>
<span style="left:2853.77px;top:1070.00px;font-size:23.80px;line-height:23.80px;letter-spacing:2.505px;color:#383b45;-webkit-text-stroke:0.2px #383b45;transform:scaleX(1.0700);transform-origin:0 0;">29-4</span>
<span style="left:2847.59px;top:1261.00px;font-size:23.80px;line-height:23.80px;letter-spacing:0.677px;color:#383b45;-webkit-text-stroke:0.2px #383b45;transform:scaleX(1.0700);transform-origin:0 0;">$3.4M</span>
<div style="left:2831.1px;top:1116px;width:104.9px;height:104px;border-radius:20px;background:#cfdbf8"></div>
<span style="left:712.26px;top:1137.00px;font-size:23.80px;line-height:23.80px;letter-spacing:0.569px;color:#383b45;-webkit-text-stroke:0.7px #383b45;transform:scaleX(1.0700);transform-origin:0 0;">Evergreen</span>
<span style="left:712.26px;top:1173.00px;font-size:23.80px;line-height:23.80px;letter-spacing:0.942px;color:#383b45;-webkit-text-stroke:0.2px #383b45;transform:scaleX(1.0700);transform-origin:0 0;">Planned Budget:</span>
<span style="left:928.95px;top:1173.00px;font-size:23.80px;line-height:23.80px;letter-spacing:0.313px;color:#383b45;-webkit-text-stroke:0.2px #383b45;transform:scaleX(1.0700);transform-origin:0 0;">$83,628,607.43</span>
<svg style="left:0;top:0" width="1" height="1"><path d="M1273.5 1162.5L1282.8 1172.1L1292.0 1162.5" fill="none" stroke="#2a3045" stroke-width="2.6" stroke-linecap="round" stroke-linejoin="round"/></svg>
<span style="left:713.29px;top:1261.00px;font-size:23.80px;line-height:23.80px;letter-spacing:1.222px;color:#383b45;-webkit-text-stroke:0.2px #383b45;transform:scaleX(1.0700);transform-origin:0 0;">Total:</span>
<span style="left:795.75px;top:1261.00px;font-size:23.80px;line-height:23.80px;letter-spacing:0.255px;color:#383b45;-webkit-text-stroke:0.2px #383b45;transform:scaleX(1.0700);transform-origin:0 0;">$83,628,607.43</span>
<div style="left:693.0px;top:1377.8px;width:502.2px;height:1.2px;background:#e7e7e9"></div>
<div style="left:682.9px;top:1387.9px;width:1.2px;height:520px;background:#e7e7e9"></div>
<div style="left:1204.1px;top:1387.9px;width:1.2px;height:520px;background:#e7e7e9"></div>
<span style="left:720.36px;top:1425.00px;font-size:23.80px;line-height:23.80px;letter-spacing:0.887px;color:#3d4359;-webkit-text-stroke:0.2px #3d4359;transform:scaleX(1.0700);transform-origin:0 0;">Budget By Funnel</span>
<span style="left:722.25px;top:1472.00px;font-size:51.00px;line-height:51.00px;letter-spacing:1.018px;color:#3d4359;-webkit-text-stroke:0.3px #3d4359;transform:scaleX(1.0700);transform-origin:0 0;">$83.63M</span>
<svg style="left:0;top:0" width="1" height="1"><g fill="none" stroke="#808080" stroke-width="2.2" stroke-linecap="round" stroke-linejoin="round"><path d="M1146.40 1419.90L1146.83 1419.91L1147.26 1419.96L1147.68 1420.05L1148.09 1420.23L1148.47 1420.56L1148.80 1421.16L1149.03 1422.11L1149.18 1423.23L1149.31 1424.17L1149.49 1424.78L1149.71 1425.14L1149.95 1425.36L1150.22 1425.52L1150.49 1425.65L1150.76 1425.77L1151.04 1425.88L1151.32 1425.98L1151.62 1426.05L1151.95 1426.07L1152.36 1425.97L1152.92 1425.66L1153.68 1425.09L1154.58 1424.40L1155.41 1423.90L1156.06 1423.71L1156.57 1423.74L1156.98 1423.91L1157.35 1424.14L1157.68 1424.41L1158.00 1424.70L1158.29 1425.02L1158.56 1425.35L1158.79 1425.72L1158.96 1426.13L1158.99 1426.64L1158.80 1427.29L1158.30 1428.12L1157.61 1429.02L1157.04 1429.78L1156.73 1430.34L1156.63 1430.75L1156.65 1431.08L1156.72 1431.38L1156.82 1431.66L1156.93 1431.94L1157.05 1432.21L1157.18 1432.48L1157.34 1432.75L1157.56 1432.99L1157.92 1433.21L1158.53 1433.39L1159.47 1433.52L1160.59 1433.67L1161.54 1433.90L1162.14 1434.23L1162.47 1434.61L1162.65 1435.02L1162.74 1435.44L1162.79 1435.87L1162.80 1436.30L1162.79 1436.73L1162.74 1437.16L1162.65 1437.58L1162.47 1437.99L1162.14 1438.37L1161.54 1438.70L1160.59 1438.93L1159.47 1439.08L1158.53 1439.21L1157.92 1439.39L1157.56 1439.61L1157.34 1439.85L1157.18 1440.12L1157.05 1440.39L1156.93 1440.66L1156.82 1440.94L1156.72 1441.22L1156.65 1441.52L1156.63 1441.85L1156.73 1442.26L1157.04 1442.82L1157.61 1443.58L1158.30 1444.48L1158.80 1445.31L1158.99 1445.96L1158.96 1446.47L1158.79 1446.88L1158.56 1447.25L1158.29 1447.58L1158.00 1447.90L1157.68 1448.19L1157.35 1448.46L1156.98 1448.69L1156.57 1448.86L1156.06 1448.89L1155.41 1448.70L1154.58 1448.20L1153.68 1447.51L1152.92 1446.94L1152.36 1446.63L1151.95 1446.53L1151.62 1446.55L1151.32 1446.62L1151.04 1446.72L1150.76 1446.83L1150.49 1446.95L1150.22 1447.08L1149.95 1447.24L1149.71 1447.46L1149.49 1447.82L1149.31 1448.43L1149.18 1449.37L1149.03 1450.49L1148.80 1451.44L1148.47 1452.04L1148.09 1452.37L1147.68 1452.55L1147.26 1452.64L1146.83 1452.69L1146.40 1452.70L1145.97 1452.69L1145.54 1452.64L1145.12 1452.55L1144.71 1452.37L1144.33 1452.04L1144.00 1451.44L1143.77 1450.49L1143.62 1449.37L1143.49 1448.43L1143.31 1447.82L1143.09 1447.46L1142.85 1447.24L1142.58 1447.08L1142.31 1446.95L1142.04 1446.83L1141.76 1446.72L1141.48 1446.62L1141.18 1446.55L1140.85 1446.53L1140.44 1446.63L1139.88 1446.94L1139.12 1447.51L1138.22 1448.20L1137.39 1448.70L1136.74 1448.89L1136.23 1448.86L1135.82 1448.69L1135.45 1448.46L1135.12 1448.19L1134.80 1447.90L1134.51 1447.58L1134.24 1447.25L1134.01 1446.88L1133.84 1446.47L1133.81 1445.96L1134.00 1445.31L1134.50 1444.48L1135.19 1443.58L1135.76 1442.82L1136.07 1442.26L1136.17 1441.85L1136.15 1441.52L1136.08 1441.22L1135.98 1440.94L1135.87 1440.66L1135.75 1440.39L1135.62 1440.12L1135.46 1439.85L1135.24 1439.61L1134.88 1439.39L1134.27 1439.21L1133.33 1439.08L1132.21 1438.93L1131.26 1438.70L1130.66 1438.37L1130.33 1437.99L1130.15 1437.58L1130.06 1437.16L1130.01 1436.73L1130.00 1436.30L1130.01 1435.87L1130.06 1435.44L1130.15 1435.02L1130.33 1434.61L1130.66 1434.23L1131.26 1433.90L1132.21 1433.67L1133.33 1433.52L1134.27 1433.39L1134.88 1433.21L1135.24 1432.99L1135.46 1432.75L1135.62 1432.48L1135.75 1432.21L1135.87 1431.94L1135.98 1431.66L1136.08 1431.38L1136.15 1431.08L1136.17 1430.75L1136.07 1430.34L1135.76 1429.78L1135.19 1429.02L1134.50 1428.12L1134.00 1427.29L1133.81 1426.64L1133.84 1426.13L1134.01 1425.72L1134.24 1425.35L1134.51 1425.02L1134.80 1424.70L1135.12 1424.41L1135.45 1424.14L1135.82 1423.91L1136.23 1423.74L1136.74 1423.71L1137.39 1423.90L1138.22 1424.40L1139.12 1425.09L1139.88 1425.66L1140.44 1425.97L1140.85 1426.07L1141.18 1426.05L1141.48 1425.98L1141.76 1425.88L1142.04 1425.77L1142.31 1425.65L1142.58 1425.52L1142.85 1425.36L1143.09 1425.14L1143.31 1424.78L1143.49 1424.17L1143.62 1423.23L1143.77 1422.11L1144.00 1421.16L1144.33 1420.56L1144.71 1420.23L1145.12 1420.05L1145.54 1419.96L1145.97 1419.91Z"/><circle cx="1146.4" cy="1436.3" r="5.3"/></g></svg>
<div style="left:1273.0px;top:1377.8px;width:502.2px;height:1.2px;background:#e7e7e9"></div>
<div style="left:1262.9px;top:1387.9px;width:1.2px;height:520px;background:#e7e7e9"></div>
<div style="left:1784.1px;top:1387.9px;width:1.2px;height:520px;background:#e7e7e9"></div>
<span style="left:1301.89px;top:1425.00px;font-size:23.80px;line-height:23.80px;letter-spacing:0.957px;color:#3d4359;-webkit-text-stroke:0.2px #3d4359;transform:scaleX(1.0700);transform-origin:0 0;">Traffic By Channel</span>
<span style="left:1300.07px;top:1472.00px;font-size:51.00px;line-height:51.00px;letter-spacing:2.012px;color:#3d4359;-webkit-text-stroke:0.3px #3d4359;transform:scaleX(1.0700);transform-origin:0 0;">668.69M</span>
<svg style="left:0;top:0" width="1" height="1"><g fill="none" stroke="#808080" stroke-width="2.2" stroke-linecap="round" stroke-linejoin="round"><path d="M1726.40 1419.90L1726.83 1419.91L1727.26 1419.96L1727.68 1420.05L1728.09 1420.23L1728.47 1420.56L1728.80 1421.16L1729.03 1422.11L1729.18 1423.23L1729.31 1424.17L1729.49 1424.78L1729.71 1425.14L1729.95 1425.36L1730.22 1425.52L1730.49 1425.65L1730.76 1425.77L1731.04 1425.88L1731.32 1425.98L1731.62 1426.05L1731.95 1426.07L1732.36 1425.97L1732.92 1425.66L1733.68 1425.09L1734.58 1424.40L1735.41 1423.90L1736.06 1423.71L1736.57 1423.74L1736.98 1423.91L1737.35 1424.14L1737.68 1424.41L1738.00 1424.70L1738.29 1425.02L1738.56 1425.35L1738.79 1425.72L1738.96 1426.13L1738.99 1426.64L1738.80 1427.29L1738.30 1428.12L1737.61 1429.02L1737.04 1429.78L1736.73 1430.34L1736.63 1430.75L1736.65 1431.08L1736.72 1431.38L1736.82 1431.66L1736.93 1431.94L1737.05 1432.21L1737.18 1432.48L1737.34 1432.75L1737.56 1432.99L1737.92 1433.21L1738.53 1433.39L1739.47 1433.52L1740.59 1433.67L1741.54 1433.90L1742.14 1434.23L1742.47 1434.61L1742.65 1435.02L1742.74 1435.44L1742.79 1435.87L1742.80 1436.30L1742.79 1436.73L1742.74 1437.16L1742.65 1437.58L1742.47 1437.99L1742.14 1438.37L1741.54 1438.70L1740.59 1438.93L1739.47 1439.08L1738.53 1439.21L1737.92 1439.39L1737.56 1439.61L1737.34 1439.85L1737.18 1440.12L1737.05 1440.39L1736.93 1440.66L1736.82 1440.94L1736.72 1441.22L1736.65 1441.52L1736.63 1441.85L1736.73 1442.26L1737.04 1442.82L1737.61 1443.58L1738.30 1444.48L1738.80 1445.31L1738.99 1445.96L1738.96 1446.47L1738.79 1446.88L1738.56 1447.25L1738.29 1447.58L1738.00 1447.90L1737.68 1448.19L1737.35 1448.46L1736.98 1448.69L1736.57 1448.86L1736.06 1448.89L1735.41 1448.70L1734.58 1448.20L1733.68 1447.51L1732.92 1446.94L1732.36 1446.63L1731.95 1446.53L1731.62 1446.55L1731.32 1446.62L1731.04 1446.72L1730.76 1446.83L1730.49 1446.95L1730.22 1447.08L1729.95 1447.24L1729.71 1447.46L1729.49 1447.82L1729.31 1448.43L1729.18 1449.37L1729.03 1450.49L1728.80 1451.44L1728.47 1452.04L1728.09 1452.37L1727.68 1452.55L1727.26 1452.64L1726.83 1452.69L1726.40 1452.70L1725.97 1452.69L1725.54 1452.64L1725.12 1452.55L1724.71 1452.37L1724.33 1452.04L1724.00 1451.44L1723.77 1450.49L1723.62 1449.37L1723.49 1448.43L1723.31 1447.82L1723.09 1447.46L1722.85 1447.24L1722.58 1447.08L1722.31 1446.95L1722.04 1446.83L1721.76 1446.72L1721.48 1446.62L1721.18 1446.55L1720.85 1446.53L1720.44 1446.63L1719.88 1446.94L1719.12 1447.51L1718.22 1448.20L1717.39 1448.70L1716.74 1448.89L1716.23 1448.86L1715.82 1448.69L1715.45 1448.46L1715.12 1448.19L1714.80 1447.90L1714.51 1447.58L1714.24 1447.25L1714.01 1446.88L1713.84 1446.47L1713.81 1445.96L1714.00 1445.31L1714.50 1444.48L1715.19 1443.58L1715.76 1442.82L1716.07 1442.26L1716.17 1441.85L1716.15 1441.52L1716.08 1441.22L1715.98 1440.94L1715.87 1440.66L1715.75 1440.39L1715.62 1440.12L1715.46 1439.85L1715.24 1439.61L1714.88 1439.39L1714.27 1439.21L1713.33 1439.08L1712.21 1438.93L1711.26 1438.70L1710.66 1438.37L1710.33 1437.99L1710.15 1437.58L1710.06 1437.16L1710.01 1436.73L1710.00 1436.30L1710.01 1435.87L1710.06 1435.44L1710.15 1435.02L1710.33 1434.61L1710.66 1434.23L1711.26 1433.90L1712.21 1433.67L1713.33 1433.52L1714.27 1433.39L1714.88 1433.21L1715.24 1432.99L1715.46 1432.75L1715.62 1432.48L1715.75 1432.21L1715.87 1431.94L1715.98 1431.66L1716.08 1431.38L1716.15 1431.08L1716.17 1430.75L1716.07 1430.34L1715.76 1429.78L1715.19 1429.02L1714.50 1428.12L1714.00 1427.29L1713.81 1426.64L1713.84 1426.13L1714.01 1425.72L1714.24 1425.35L1714.51 1425.02L1714.80 1424.70L1715.12 1424.41L1715.45 1424.14L1715.82 1423.91L1716.23 1423.74L1716.74 1423.71L1717.39 1423.90L1718.22 1424.40L1719.12 1425.09L1719.88 1425.66L1720.44 1425.97L1720.85 1426.07L1721.18 1426.05L1721.48 1425.98L1721.76 1425.88L1722.04 1425.77L1722.31 1425.65L1722.58 1425.52L1722.85 1425.36L1723.09 1425.14L1723.31 1424.78L1723.49 1424.17L1723.62 1423.23L1723.77 1422.11L1724.00 1421.16L1724.33 1420.56L1724.71 1420.23L1725.12 1420.05L1725.54 1419.96L1725.97 1419.91Z"/><circle cx="1726.4" cy="1436.3" r="5.3"/></g></svg>
<div style="left:1852.1px;top:1377.8px;width:502.2px;height:1.2px;background:#e7e7e9"></div>
<div style="left:1842.0px;top:1387.9px;width:1.2px;height:520px;background:#e7e7e9"></div>
<div style="left:2363.2px;top:1387.9px;width:1.2px;height:520px;background:#e7e7e9"></div>
<span style="left:1879.46px;top:1425.00px;font-size:23.80px;line-height:23.80px;letter-spacing:0.890px;color:#3d4359;-webkit-text-stroke:0.2px #3d4359;transform:scaleX(1.0700);transform-origin:0 0;">Budget By Channel</span>
<span style="left:1881.35px;top:1472.00px;font-size:51.00px;line-height:51.00px;letter-spacing:1.018px;color:#3d4359;-webkit-text-stroke:0.3px #3d4359;transform:scaleX(1.0700);transform-origin:0 0;">$83.63M</span>
<svg style="left:0;top:0" width="1" height="1"><g fill="none" stroke="#808080" stroke-width="2.2" stroke-linecap="round" stroke-linejoin="round"><path d="M2305.50 1419.90L2305.93 1419.91L2306.36 1419.96L2306.78 1420.05L2307.19 1420.23L2307.57 1420.56L2307.90 1421.16L2308.13 1422.11L2308.28 1423.23L2308.41 1424.17L2308.59 1424.78L2308.81 1425.14L2309.05 1425.36L2309.32 1425.52L2309.59 1425.65L2309.86 1425.77L2310.14 1425.88L2310.42 1425.98L2310.72 1426.05L2311.05 1426.07L2311.46 1425.97L2312.02 1425.66L2312.78 1425.09L2313.68 1424.40L2314.51 1423.90L2315.16 1423.71L2315.67 1423.74L2316.08 1423.91L2316.45 1424.14L2316.78 1424.41L2317.10 1424.70L2317.39 1425.02L2317.66 1425.35L2317.89 1425.72L2318.06 1426.13L2318.09 1426.64L2317.90 1427.29L2317.40 1428.12L2316.71 1429.02L2316.14 1429.78L2315.83 1430.34L2315.73 1430.75L2315.75 1431.08L2315.82 1431.38L2315.92 1431.66L2316.03 1431.94L2316.15 1432.21L2316.28 1432.48L2316.44 1432.75L2316.66 1432.99L2317.02 1433.21L2317.63 1433.39L2318.57 1433.52L2319.69 1433.67L2320.64 1433.90L2321.24 1434.23L2321.57 1434.61L2321.75 1435.02L2321.84 1435.44L2321.89 1435.87L2321.90 1436.30L2321.89 1436.73L2321.84 1437.16L2321.75 1437.58L2321.57 1437.99L2321.24 1438.37L2320.64 1438.70L2319.69 1438.93L2318.57 1439.08L2317.63 1439.21L2317.02 1439.39L2316.66 1439.61L2316.44 1439.85L2316.28 1440.12L2316.15 1440.39L2316.03 1440.66L2315.92 1440.94L2315.82 1441.22L2315.75 1441.52L2315.73 1441.85L2315.83 1442.26L2316.14 1442.82L2316.71 1443.58L2317.40 1444.48L2317.90 1445.31L2318.09 1445.96L2318.06 1446.47L2317.89 1446.88L2317.66 1447.25L2317.39 1447.58L2317.10 1447.90L2316.78 1448.19L2316.45 1448.46L2316.08 1448.69L2315.67 1448.86L2315.16 1448.89L2314.51 1448.70L2313.68 1448.20L2312.78 1447.51L2312.02 1446.94L2311.46 1446.63L2311.05 1446.53L2310.72 1446.55L2310.42 1446.62L2310.14 1446.72L2309.86 1446.83L2309.59 1446.95L2309.32 1447.08L2309.05 1447.24L2308.81 1447.46L2308.59 1447.82L2308.41 1448.43L2308.28 1449.37L2308.13 1450.49L2307.90 1451.44L2307.57 1452.04L2307.19 1452.37L2306.78 1452.55L2306.36 1452.64L2305.93 1452.69L2305.50 1452.70L2305.07 1452.69L2304.64 1452.64L2304.22 1452.55L2303.81 1452.37L2303.43 1452.04L2303.10 1451.44L2302.87 1450.49L2302.72 1449.37L2302.59 1448.43L2302.41 1447.82L2302.19 1447.46L2301.95 1447.24L2301.68 1447.08L2301.41 1446.95L2301.14 1446.83L2300.86 1446.72L2300.58 1446.62L2300.28 1446.55L2299.95 1446.53L2299.54 1446.63L2298.98 1446.94L2298.22 1447.51L2297.32 1448.20L2296.49 1448.70L2295.84 1448.89L2295.33 1448.86L2294.92 1448.69L2294.55 1448.46L2294.22 1448.19L2293.90 1447.90L2293.61 1447.58L2293.34 1447.25L2293.11 1446.88L2292.94 1446.47L2292.91 1445.96L2293.10 1445.31L2293.60 1444.48L2294.29 1443.58L2294.86 1442.82L2295.17 1442.26L2295.27 1441.85L2295.25 1441.52L2295.18 1441.22L2295.08 1440.94L2294.97 1440.66L2294.85 1440.39L2294.72 1440.12L2294.56 1439.85L2294.34 1439.61L2293.98 1439.39L2293.37 1439.21L2292.43 1439.08L2291.31 1438.93L2290.36 1438.70L2289.76 1438.37L2289.43 1437.99L2289.25 1437.58L2289.16 1437.16L2289.11 1436.73L2289.10 1436.30L2289.11 1435.87L2289.16 1435.44L2289.25 1435.02L2289.43 1434.61L2289.76 1434.23L2290.36 1433.90L2291.31 1433.67L2292.43 1433.52L2293.37 1433.39L2293.98 1433.21L2294.34 1432.99L2294.56 1432.75L2294.72 1432.48L2294.85 1432.21L2294.97 1431.94L2295.08 1431.66L2295.18 1431.38L2295.25 1431.08L2295.27 1430.75L2295.17 1430.34L2294.86 1429.78L2294.29 1429.02L2293.60 1428.12L2293.10 1427.29L2292.91 1426.64L2292.94 1426.13L2293.11 1425.72L2293.34 1425.35L2293.61 1425.02L2293.90 1424.70L2294.22 1424.41L2294.55 1424.14L2294.92 1423.91L2295.33 1423.74L2295.84 1423.71L2296.49 1423.90L2297.32 1424.40L2298.22 1425.09L2298.98 1425.66L2299.54 1425.97L2299.95 1426.07L2300.28 1426.05L2300.58 1425.98L2300.86 1425.88L2301.14 1425.77L2301.41 1425.65L2301.68 1425.52L2301.95 1425.36L2302.19 1425.14L2302.41 1424.78L2302.59 1424.17L2302.72 1423.23L2302.87 1422.11L2303.10 1421.16L2303.43 1420.56L2303.81 1420.23L2304.22 1420.05L2304.64 1419.96L2305.07 1419.91Z"/><circle cx="2305.5" cy="1436.3" r="5.3"/></g></svg>
<div style="left:2432.1px;top:1377.8px;width:502.2px;height:1.2px;background:#e7e7e9"></div>
<div style="left:2422.0px;top:1387.9px;width:1.2px;height:520px;background:#e7e7e9"></div>
<div style="left:2943.2px;top:1387.9px;width:1.2px;height:520px;background:#e7e7e9"></div>
<span style="left:2459.46px;top:1425.00px;font-size:23.80px;line-height:23.80px;letter-spacing:0.675px;color:#3d4359;-webkit-text-stroke:0.2px #3d4359;transform:scaleX(1.0700);transform-origin:0 0;">Revenue By Channel</span>
<span style="left:2461.39px;top:1472.00px;font-size:51.00px;line-height:51.00px;letter-spacing:-0.747px;color:#3d4359;-webkit-text-stroke:0.3px #3d4359;">$471.16M</span>
<svg style="left:0;top:0" width="1" height="1"><g fill="none" stroke="#808080" stroke-width="2.2" stroke-linecap="round" stroke-linejoin="round"><path d="M2885.50 1419.90L2885.93 1419.91L2886.36 1419.96L2886.78 1420.05L2887.19 1420.23L2887.57 1420.56L2887.90 1421.16L2888.13 1422.11L2888.28 1423.23L2888.41 1424.17L2888.59 1424.78L2888.81 1425.14L2889.05 1425.36L2889.32 1425.52L2889.59 1425.65L2889.86 1425.77L2890.14 1425.88L2890.42 1425.98L2890.72 1426.05L2891.05 1426.07L2891.46 1425.97L2892.02 1425.66L2892.78 1425.09L2893.68 1424.40L2894.51 1423.90L2895.16 1423.71L2895.67 1423.74L2896.08 1423.91L2896.45 1424.14L2896.78 1424.41L2897.10 1424.70L2897.39 1425.02L2897.66 1425.35L2897.89 1425.72L2898.06 1426.13L2898.09 1426.64L2897.90 1427.29L2897.40 1428.12L2896.71 1429.02L2896.14 1429.78L2895.83 1430.34L2895.73 1430.75L2895.75 1431.08L2895.82 1431.38L2895.92 1431.66L2896.03 1431.94L2896.15 1432.21L2896.28 1432.48L2896.44 1432.75L2896.66 1432.99L2897.02 1433.21L2897.63 1433.39L2898.57 1433.52L2899.69 1433.67L2900.64 1433.90L2901.24 1434.23L2901.57 1434.61L2901.75 1435.02L2901.84 1435.44L2901.89 1435.87L2901.90 1436.30L2901.89 1436.73L2901.84 1437.16L2901.75 1437.58L2901.57 1437.99L2901.24 1438.37L2900.64 1438.70L2899.69 1438.93L2898.57 1439.08L2897.63 1439.21L2897.02 1439.39L2896.66 1439.61L2896.44 1439.85L2896.28 1440.12L2896.15 1440.39L2896.03 1440.66L2895.92 1440.94L2895.82 1441.22L2895.75 1441.52L2895.73 1441.85L2895.83 1442.26L2896.14 1442.82L2896.71 1443.58L2897.40 1444.48L2897.90 1445.31L2898.09 1445.96L2898.06 1446.47L2897.89 1446.88L2897.66 1447.25L2897.39 1447.58L2897.10 1447.90L2896.78 1448.19L2896.45 1448.46L2896.08 1448.69L2895.67 1448.86L2895.16 1448.89L2894.51 1448.70L2893.68 1448.20L2892.78 1447.51L2892.02 1446.94L2891.46 1446.63L2891.05 1446.53L2890.72 1446.55L2890.42 1446.62L2890.14 1446.72L2889.86 1446.83L2889.59 1446.95L2889.32 1447.08L2889.05 1447.24L2888.81 1447.46L2888.59 1447.82L2888.41 1448.43L2888.28 1449.37L2888.13 1450.49L2887.90 1451.44L2887.57 1452.04L2887.19 1452.37L2886.78 1452.55L2886.36 1452.64L2885.93 1452.69L2885.50 1452.70L2885.07 1452.69L2884.64 1452.64L2884.22 1452.55L2883.81 1452.37L2883.43 1452.04L2883.10 1451.44L2882.87 1450.49L2882.72 1449.37L2882.59 1448.43L2882.41 1447.82L2882.19 1447.46L2881.95 1447.24L2881.68 1447.08L2881.41 1446.95L2881.14 1446.83L2880.86 1446.72L2880.58 1446.62L2880.28 1446.55L2879.95 1446.53L2879.54 1446.63L2878.98 1446.94L2878.22 1447.51L2877.32 1448.20L2876.49 1448.70L2875.84 1448.89L2875.33 1448.86L2874.92 1448.69L2874.55 1448.46L2874.22 1448.19L2873.90 1447.90L2873.61 1447.58L2873.34 1447.25L2873.11 1446.88L2872.94 1446.47L2872.91 1445.96L2873.10 1445.31L2873.60 1444.48L2874.29 1443.58L2874.86 1442.82L2875.17 1442.26L2875.27 1441.85L2875.25 1441.52L2875.18 1441.22L2875.08 1440.94L2874.97 1440.66L2874.85 1440.39L2874.72 1440.12L2874.56 1439.85L2874.34 1439.61L2873.98 1439.39L2873.37 1439.21L2872.43 1439.08L2871.31 1438.93L2870.36 1438.70L2869.76 1438.37L2869.43 1437.99L2869.25 1437.58L2869.16 1437.16L2869.11 1436.73L2869.10 1436.30L2869.11 1435.87L2869.16 1435.44L2869.25 1435.02L2869.43 1434.61L2869.76 1434.23L2870.36 1433.90L2871.31 1433.67L2872.43 1433.52L2873.37 1433.39L2873.98 1433.21L2874.34 1432.99L2874.56 1432.75L2874.72 1432.48L2874.85 1432.21L2874.97 1431.94L2875.08 1431.66L2875.18 1431.38L2875.25 1431.08L2875.27 1430.75L2875.17 1430.34L2874.86 1429.78L2874.29 1429.02L2873.60 1428.12L2873.10 1427.29L2872.91 1426.64L2872.94 1426.13L2873.11 1425.72L2873.34 1425.35L2873.61 1425.02L2873.90 1424.70L2874.22 1424.41L2874.55 1424.14L2874.92 1423.91L2875.33 1423.74L2875.84 1423.71L2876.49 1423.90L2877.32 1424.40L2878.22 1425.09L2878.98 1425.66L2879.54 1425.97L2879.95 1426.07L2880.28 1426.05L2880.58 1425.98L2880.86 1425.88L2881.14 1425.77L2881.41 1425.65L2881.68 1425.52L2881.95 1425.36L2882.19 1425.14L2882.41 1424.78L2882.59 1424.17L2882.72 1423.23L2882.87 1422.11L2883.10 1421.16L2883.43 1420.56L2883.81 1420.23L2884.22 1420.05L2884.64 1419.96L2885.07 1419.91Z"/><circle cx="2885.5" cy="1436.3" r="5.3"/></g></svg>
<svg style="left:0;top:0" width="1" height="1"><path d="M943.80 1624.30A109.7 109.7 0 0 1 960.96 1625.65L955.75 1658.54A76.4 76.4 0 0 0 943.80 1657.60Z" fill="#5aacf5" stroke="#fff" stroke-width="2" stroke-linejoin="round"/><path d="M960.96 1625.65A109.7 109.7 0 1 1 943.80 1624.30L943.80 1657.60A76.4 76.4 0 1 0 955.75 1658.54Z" fill="#534fc0" stroke="#fff" stroke-width="2" stroke-linejoin="round"/></svg>
<svg style="left:0;top:0" width="1" height="1"><path d="M2104.43 1624.31A109.7 109.7 0 0 1 2111.13 1624.61L2108.63 1657.82A76.4 76.4 0 0 0 2103.97 1657.61Z" fill="#4a48b5" stroke="#fff" stroke-width="2" stroke-linejoin="round"/><path d="M2111.13 1624.61A109.7 109.7 0 0 1 2137.89 1630.03L2127.27 1661.59A76.4 76.4 0 0 0 2108.63 1657.82Z" fill="#6bde80" stroke="#fff" stroke-width="2" stroke-linejoin="round"/><path d="M2137.89 1630.03A109.7 109.7 0 0 1 2212.54 1737.64L2179.26 1736.53A76.4 76.4 0 0 0 2127.27 1661.59Z" fill="#ec7446" stroke="#fff" stroke-width="2" stroke-linejoin="round"/><path d="M2212.54 1737.64A109.7 109.7 0 0 1 2092.39 1843.19L2095.58 1810.05A76.4 76.4 0 0 0 2179.26 1736.53Z" fill="#7088bb" stroke="#fff" stroke-width="2" stroke-linejoin="round"/><path d="M2092.39 1843.19A109.7 109.7 0 0 1 2102.90 1624.30L2102.90 1657.60A76.4 76.4 0 0 0 2095.58 1810.05Z" fill="#c66ff2" stroke="#fff" stroke-width="2" stroke-linejoin="round"/></svg>
<svg style="left:0;top:0" width="1" height="1"><path d="M1391.3 1577.9H1726" stroke="#e4e4e6" stroke-width="1.6" stroke-dasharray="6.9 5.7" fill="none"/><path d="M1391.3 1734.1H1726" stroke="#e4e4e6" stroke-width="1.6" stroke-dasharray="6.9 5.7" fill="none"/><path d="M1531.5 1900V1891.6a3.6 3.6 0 0 1 3.6 -3.6H1554.0a3.6 3.6 0 0 1 3.6 3.6V1900Z" fill="#6bde80"/><path d="M1564.0 1900V1782.6a3.6 3.6 0 0 1 3.6 -3.6H1587.0a3.6 3.6 0 0 1 3.6 3.6V1900Z" fill="#ec7446"/><path d="M1598.0 1900V1762.6a3.6 3.6 0 0 1 3.6 -3.6H1621.0a3.6 3.6 0 0 1 3.6 3.6V1900Z" fill="#7088bb"/><path d="M1632.0 1900V1622.1a3.6 3.6 0 0 1 3.6 -3.6H1655.4a3.6 3.6 0 0 1 3.6 3.6V1900Z" fill="#c66ff2"/></svg>
<svg style="left:0;top:0" width="1" height="1"><path d="M2550.3 1577.9H2885.2" stroke="#e4e4e6" stroke-width="1.6" stroke-dasharray="6.9 5.7" fill="none"/><path d="M2550.3 1681.9H2885.2" stroke="#e4e4e6" stroke-width="1.6" stroke-dasharray="6.9 5.7" fill="none"/><path d="M2550.3 1786.2H2885.2" stroke="#e4e4e6" stroke-width="1.6" stroke-dasharray="6.9 5.7" fill="none"/><path d="M2723.2 1900V1867.0a3.6 3.6 0 0 1 3.6 -3.6H2746.2a3.6 3.6 0 0 1 3.6 3.6V1900Z" fill="#ec7446"/><path d="M2757.2 1900V1714.1a3.6 3.6 0 0 1 3.6 -3.6H2780.2a3.6 3.6 0 0 1 3.6 3.6V1900Z" fill="#7088bb"/><path d="M2791.2 1900V1614.9a3.6 3.6 0 0 1 3.6 -3.6H2814.6a3.6 3.6 0 0 1 3.6 3.6V1900Z" fill="#c66ff2"/></svg>
<span style="left:1315.08px;top:1572.00px;font-size:23.00px;line-height:23.00px;letter-spacing:0.386px;color:#2b2b2b;">400M</span>
<span style="left:1314.45px;top:1729.00px;font-size:23.00px;line-height:23.00px;letter-spacing:0.597px;color:#2b2b2b;">200M</span>
<span style="left:2461.37px;top:1572.00px;font-size:23.00px;line-height:23.00px;letter-spacing:0.337px;color:#2b2b2b;">$300M</span>
<span style="left:2461.37px;top:1677.00px;font-size:23.00px;line-height:23.00px;letter-spacing:0.337px;color:#2b2b2b;">$200M</span>
<span style="left:2461.37px;top:1782.00px;font-size:23.00px;line-height:23.00px;letter-spacing:0.337px;color:#2b2b2b;">$100M</span>
</div>
</body></html>
